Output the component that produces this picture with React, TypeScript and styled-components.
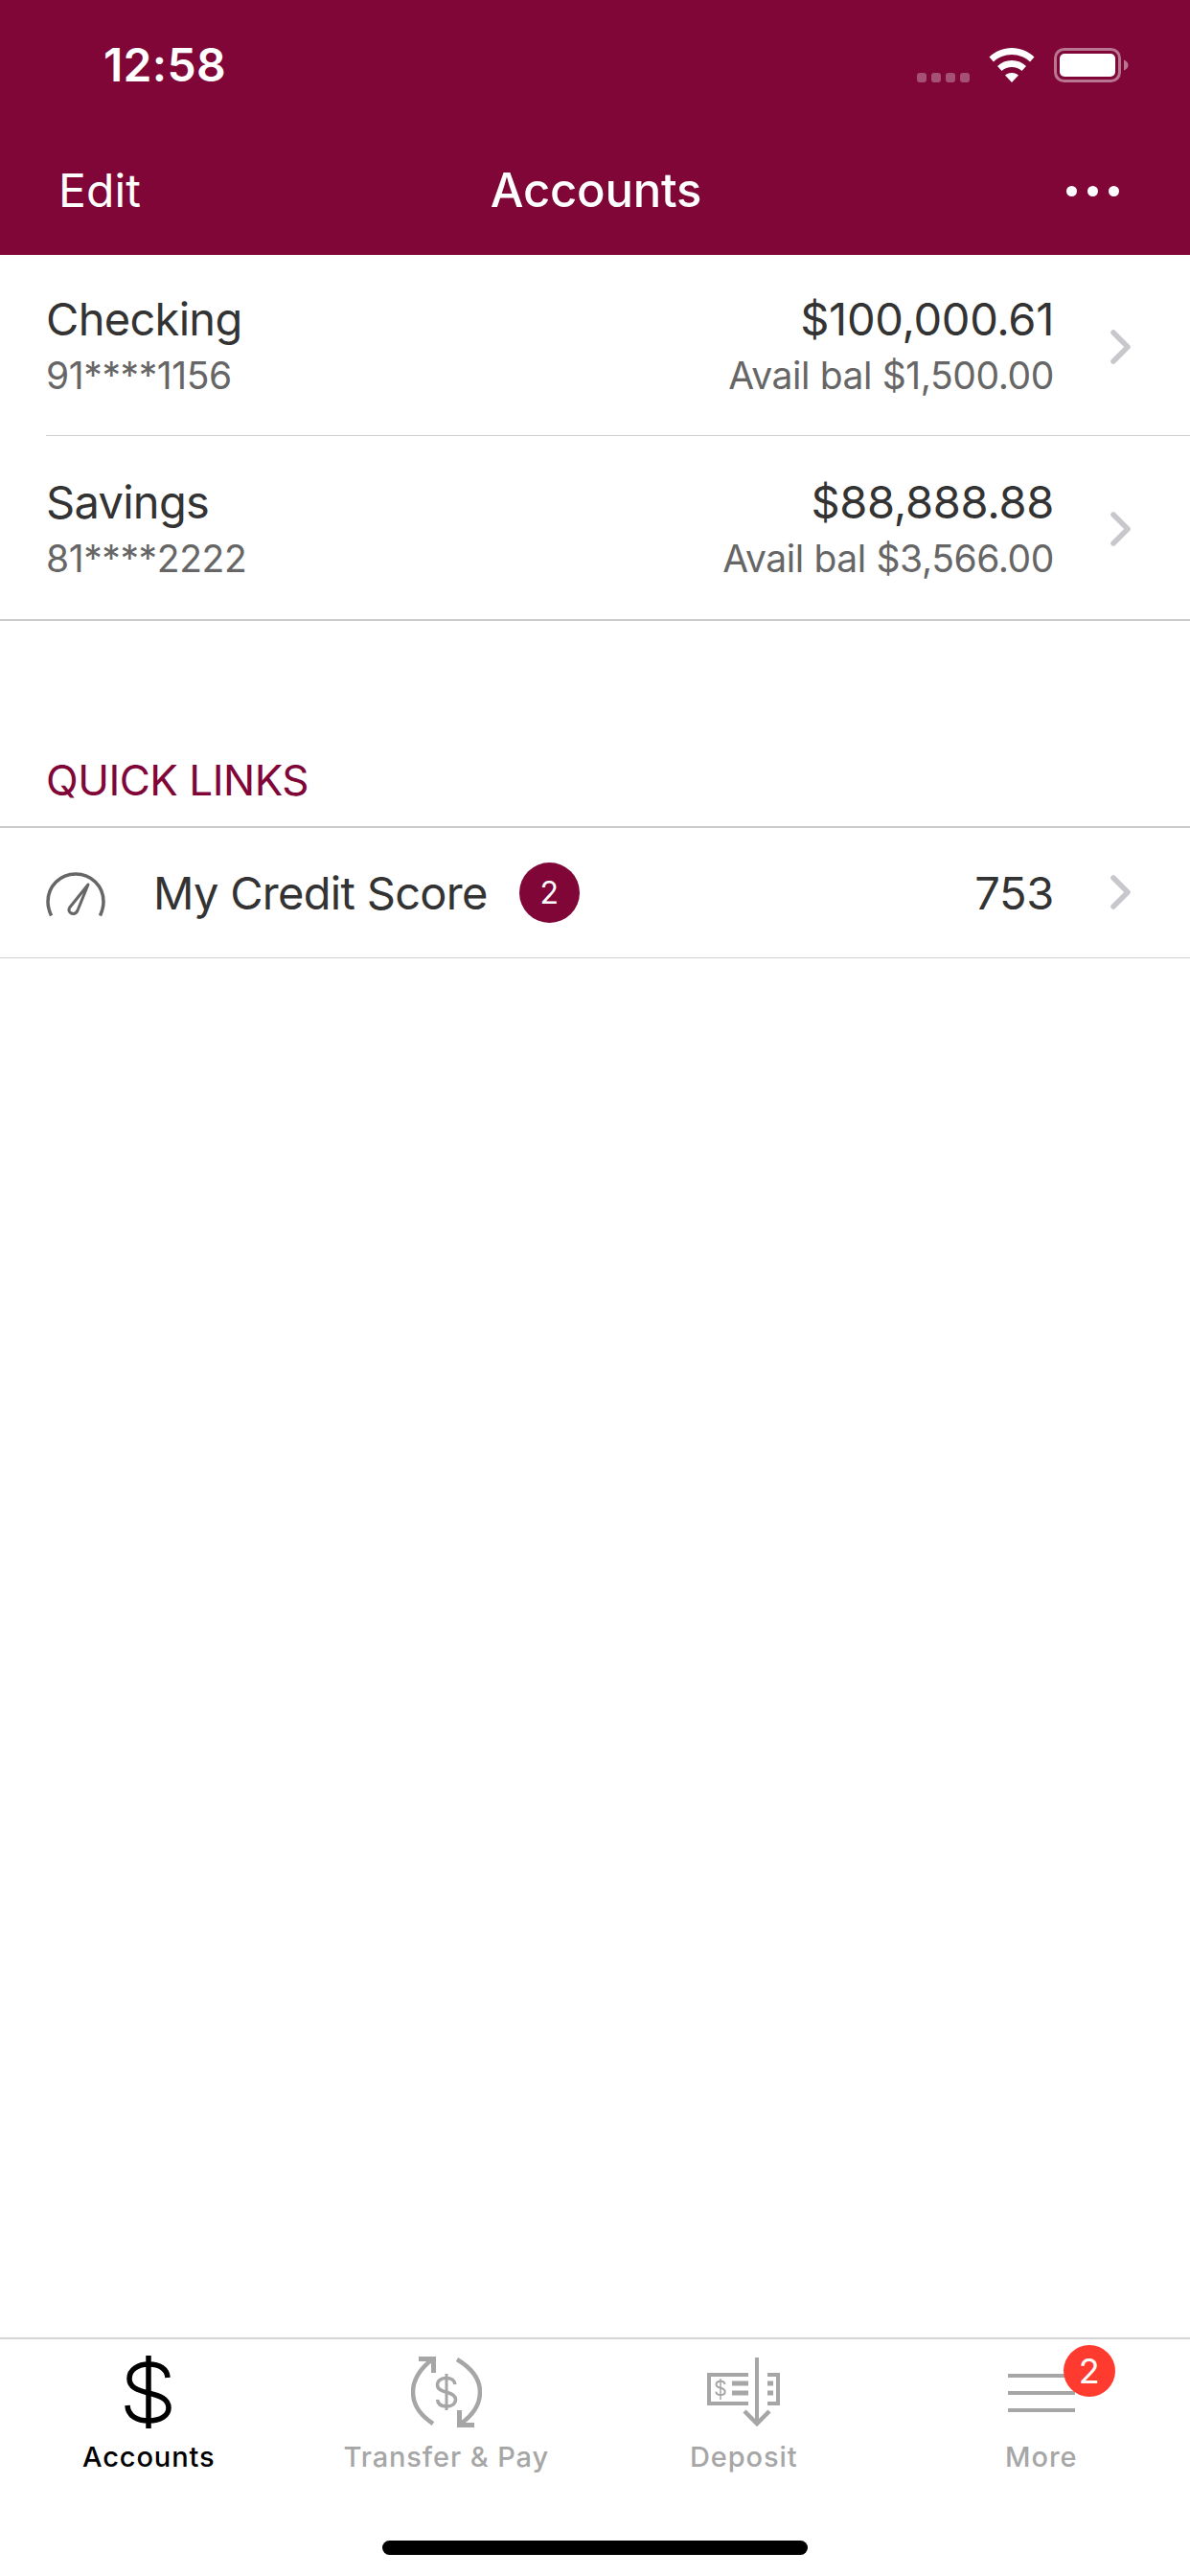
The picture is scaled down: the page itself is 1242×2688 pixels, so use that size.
import React from "react";
import styled, { createGlobalStyle } from "styled-components";

const BRAND = "#7f0637";

const GlobalStyle = createGlobalStyle`
    html, body {
        margin: 0;
        padding: 0;
        background: #fff;
    }
    body {
        font-family: Inter, "Liberation Sans", sans-serif;
        -webkit-font-smoothing: antialiased;
    }
`;

const Screen = styled.div`
    width: 1242px;
    height: 2688px;
    display: flex;
    flex-direction: column;
    background: #fff;
    overflow: hidden;
`;

const Header = styled.header`
    height: 266px;
    flex-shrink: 0;
    background: ${BRAND};
    color: #fff;
    display: flex;
    flex-direction: column;
`;

const StatusBar = styled.div`
    height: 134px;
    display: flex;
    align-items: flex-start;
    justify-content: space-between;
    padding: 41px 64px 0 108px;
    box-sizing: border-box;
`;

const Clock = styled.div`
    font-size: 48px;
    line-height: 54px;
    font-weight: 600;
    letter-spacing: 0.3px;
`;

const StatusIcons = styled.div`
    display: flex;
    align-items: flex-end;
    gap: 20px;
    padding-top: 9px;
`;

const SignalDots = styled.div`
    display: flex;
    gap: 5px;
`;

const SignalDot = styled.span`
    width: 10px;
    height: 10px;
    border-radius: 3px;
    background: rgba(255, 255, 255, 0.3);
`;

const NavBar = styled.div`
    flex: 1;
    display: flex;
    align-items: center;
    justify-content: space-between;
    padding: 0 74px 0 61px;
    position: relative;
    margin-top: -2px;
`;

const NavEdit = styled.div`
    font-size: 48px;
    line-height: 60px;
    letter-spacing: 0.1px;
`;

const NavTitle = styled.div`
    position: absolute;
    left: 2px;
    right: 0;
    text-align: center;
    font-size: 49px;
    line-height: 60px;
    font-weight: 500;
    letter-spacing: -0.2px;
`;

const NavDots = styled.div`
    display: flex;
    gap: 11px;
`;

const NavDot = styled.span`
    width: 11px;
    height: 11px;
    border-radius: 50%;
    background: #fff;
`;

const AccountList = styled.section`
    border-bottom: 2px solid #cccccc;
    display: flex;
    flex-direction: column;
`;

const AccountRow = styled.div<{ $last?: boolean }>`
    height: ${(p) => (p.$last ? 191 : 189)}px;
    margin-left: 48px;
    padding: 5px 60px 0 0;
    box-sizing: border-box;
    display: flex;
    align-items: center;
    border-bottom: ${(p) => (p.$last ? "none" : "1px solid #cfcfcf")};
`;

const AccountText = styled.div`
    flex: 1;
    display: flex;
    flex-direction: column;
    gap: 1px;
`;

const Line = styled.div`
    display: flex;
    justify-content: space-between;
    align-items: baseline;
`;

const MainText = styled.span`
    font-size: 47px;
    line-height: 58px;
    color: #333;
    letter-spacing: -0.3px;
`;

const NameText = styled(MainText)`
    letter-spacing: -0.7px;
`;

const SubText = styled.span`
    font-size: 39px;
    line-height: 58px;
    color: #666;
    letter-spacing: -0.4px;
`;

const ChevronWrap = styled.div`
    margin-left: 58px;
    display: flex;
    margin-top: -2px;
`;

const SectionTitle = styled.h2`
    margin: 90px 0 0;
    height: 126px;
    padding: 0 0 21px 48px;
    display: flex;
    align-items: flex-end;
    box-sizing: border-box;
    font-size: 44px;
    line-height: 54px;
    font-weight: 400;
    letter-spacing: -0.5px;
    color: ${BRAND};
    border-bottom: 2px solid #cccccc;
`;

const LinkRow = styled.div`
    height: 136px;
    box-sizing: border-box;
    border-bottom: 1px solid #cfcfcf;
    display: flex;
    align-items: center;
    padding: 0 60px 0 48px;
`;

const GaugeWrap = styled.div`
    width: 112px;
    display: flex;
    margin-top: 5px;
`;

const LinkLabel = styled(NameText)``;

const LinkBadge = styled.span`
    width: 63px;
    height: 63px;
    margin-left: 33px;
    border-radius: 50%;
    background: ${BRAND};
    color: #fff;
    font-size: 32px;
    display: flex;
    align-items: center;
    justify-content: center;
`;

const LinkValue = styled(MainText)`
    margin-left: auto;
`;

const Spacer = styled.div`
    flex: 1;
`;

const TabBar = styled.nav`
    height: 249px;
    flex-shrink: 0;
    box-sizing: border-box;
    border-top: 2px solid #d4d4d4;
    display: flex;
    flex-direction: column;
`;

const Tabs = styled.div`
    display: grid;
    grid-template-columns: repeat(4, 1fr);
    padding-top: 17px;
`;

const Tab = styled.div<{ $active?: boolean }>`
    display: flex;
    flex-direction: column;
    align-items: center;
    color: ${(p) => (p.$active ? "#000" : "#a6a6a6")};
`;

const TabIcon = styled.div`
    position: relative;
    height: 76px;
    display: flex;
    align-items: center;
    justify-content: center;
`;

const TabLabel = styled.span`
    margin-top: 12px;
    font-size: 29px;
    line-height: 36px;
    font-weight: 500;
    letter-spacing: 0.9px;
`;

const TabBadge = styled.span`
    position: absolute;
    top: -11px;
    left: 58px;
    width: 54px;
    height: 54px;
    border-radius: 50%;
    background: #ff3b30;
    color: #fff;
    font-size: 36px;
    font-weight: 400;
    display: flex;
    align-items: center;
    justify-content: center;
`;

const HomeIndicator = styled.div`
    width: 444px;
    height: 15px;
    margin: 69px auto 0;
    border-radius: 8px;
    background: #000;
`;

const Wifi = () => (
    <svg width="48" height="36" viewBox="0 0 48 36">
        <path d="M24 0C15 0 7 3.500 0.500 9.500L5 14.500C10 9.800 16.500 7 24 7s14 2.800 19 7.500l4.500-5C41 3.500 33 0 24 0z" fill="#fff" />
        <path d="M24 13c-6 0-11 2.300-15 6l4.500 5c2.800-2.600 6.500-4 10.500-4s7.700 1.400 10.500 4l4.500-5c-4-3.700-9-6-15-6z" fill="#fff" />
        <path d="M24 26c-3 0-5.200 1-7 2.500L24 36l7-7.500C29.200 27 27 26 24 26z" fill="#fff" />
    </svg>
);

const Battery = () => (
    <svg width="78" height="36" viewBox="0 0 78 36">
        <rect x="1.500" y="1.500" width="67" height="33" rx="9" fill="none" stroke="#fff" strokeOpacity="0.45" strokeWidth="3" />
        <rect x="6" y="6" width="58" height="24" rx="5" fill="#fff" />
        <path d="M73 12.500c2.800 1 4.500 3 4.500 5.500s-1.700 4.500-4.500 5.500z" fill="#fff" fillOpacity="0.45" />
    </svg>
);

const Chevron = () => (
    <svg width="24" height="38" viewBox="0 0 24 38">
        <path d="M4 4l15 15L4 34" fill="none" stroke="#c7c7cc" strokeWidth="5.500" strokeLinecap="round" strokeLinejoin="round" />
    </svg>
);

const Gauge = () => (
    <svg width="62" height="48" viewBox="0 0 62 48">
        <path d="M5.500 45.500C3.500 41 2 36 2 31 2 14.500 15 2 31 2s29 12.500 29 29c0 5-1.500 10-3.500 14.500" fill="none" stroke="#666" strokeWidth="3.500" />
        <path d="M44 13L33 40c-1.400 3-4 4-6.500 3s-3.200-3.500-1.800-6z" fill="none" stroke="#666" strokeWidth="3" strokeLinejoin="round" />
    </svg>
);

const DollarIcon = () => (
    <svg width="50" height="76" viewBox="0 0 50 76">
        <path d="M25 0v76" stroke="currentColor" strokeWidth="5.500" />
        <path d="M45 23c-.5-9-8.500-14-19.500-14C14 9 5 14.500 5 24c0 9 8 12 20 15 12 3 21 6 21 15.500C46 63 37 68 25.500 68 12.500 68 3.500 62.500 3 52" fill="none" stroke="currentColor" strokeWidth="5.500" />
    </svg>
);

const TransferIcon = () => (
    <svg width="74" height="74" viewBox="0 0 74 74">
        <path d="M22 3C8 14 2 25 2 37c0 13 7 24 21 33" fill="none" stroke="currentColor" strokeWidth="4.500" />
        <path d="M8 2.500h15.500V17" fill="none" stroke="currentColor" strokeWidth="5" />
        <path d="M48 3c15 9 24 20 24 34 0 12-6 23-20 33" fill="none" stroke="currentColor" strokeWidth="4.500" />
        <path d="M66 71.500H50.500V56" fill="none" stroke="currentColor" strokeWidth="5" />
        <path d="M37 18v38" stroke="currentColor" strokeWidth="3" />
        <path d="M46 29c-.5-4-4-6.500-9-6.500-5.500 0-9.500 2.800-9.500 7.300 0 4.500 4 6 9.500 7.400 5.500 1.400 9.500 3 9.500 7.500s-4 7.300-9.500 7.300c-5.500 0-9-2.700-9.500-7" fill="none" stroke="currentColor" strokeWidth="3.500" />
    </svg>
);

const DepositIcon = () => (
    <svg width="76" height="72" viewBox="0 0 76 72">
        <path d="M52 0v70" stroke="currentColor" strokeWidth="4" />
        <path d="M39 56l13 13 13-13" fill="none" stroke="currentColor" strokeWidth="4.500" />
        <path d="M43 18H2v30h41" fill="none" stroke="currentColor" strokeWidth="4" />
        <path d="M63 18h11v30H63" fill="none" stroke="currentColor" strokeWidth="4" />
        <path d="M26 27h17M26 37h17" stroke="currentColor" strokeWidth="5" />
        <path d="M63 27h6M63 37h6" stroke="currentColor" strokeWidth="5" />
        <path d="M14 22v22" stroke="currentColor" strokeWidth="1.500" />
        <path d="M18.500 28c-.3-2.200-2-3.300-4.500-3.300-2.700 0-4.500 1.400-4.500 3.500s1.800 2.900 4.500 3.600c2.700.7 4.700 1.500 4.700 3.700s-2 3.600-4.700 3.600c-2.600 0-4.400-1.300-4.700-3.500" fill="none" stroke="currentColor" strokeWidth="2" />
    </svg>
);

const MenuIcon = () => (
    <svg width="70" height="76" viewBox="0 0 70 76">
        <path d="M0 21h70M0 39h70M0 57h70" stroke="currentColor" strokeWidth="4" />
    </svg>
);

const accounts = [
    { name: "Checking", mask: "91****1156", balance: "$100,000.61", avail: "Avail bal $1,500.00" },
    { name: "Savings", mask: "81****2222", balance: "$88,888.88", avail: "Avail bal $3,566.00" },
];

export default function App() {
    return (
        <Screen>
            <GlobalStyle />
            <Header>
                <StatusBar>
                    <Clock>12:58</Clock>
                    <StatusIcons>
                        <SignalDots>
                            <SignalDot />
                            <SignalDot />
                            <SignalDot />
                            <SignalDot />
                        </SignalDots>
                        <Wifi />
                        <Battery />
                    </StatusIcons>
                </StatusBar>
                <NavBar>
                    <NavEdit>Edit</NavEdit>
                    <NavTitle>Accounts</NavTitle>
                    <NavDots>
                        <NavDot />
                        <NavDot />
                        <NavDot />
                    </NavDots>
                </NavBar>
            </Header>

            <AccountList>
                {accounts.map((a, i) => (
                    <AccountRow key={a.name} $last={i === accounts.length - 1}>
                        <AccountText>
                            <Line>
                                <NameText>{a.name}</NameText>
                                <MainText>{a.balance}</MainText>
                            </Line>
                            <Line>
                                <SubText>{a.mask}</SubText>
                                <SubText>{a.avail}</SubText>
                            </Line>
                        </AccountText>
                        <ChevronWrap>
                            <Chevron />
                        </ChevronWrap>
                    </AccountRow>
                ))}
            </AccountList>

            <SectionTitle>QUICK LINKS</SectionTitle>
            <LinkRow>
                <GaugeWrap>
                    <Gauge />
                </GaugeWrap>
                <LinkLabel>My Credit Score</LinkLabel>
                <LinkBadge>2</LinkBadge>
                <LinkValue>753</LinkValue>
                <ChevronWrap>
                    <Chevron />
                </ChevronWrap>
            </LinkRow>

            <Spacer />

            <TabBar>
                <Tabs>
                    <Tab $active>
                        <TabIcon>
                            <DollarIcon />
                        </TabIcon>
                        <TabLabel>Accounts</TabLabel>
                    </Tab>
                    <Tab>
                        <TabIcon>
                            <TransferIcon />
                        </TabIcon>
                        <TabLabel>Transfer &amp; Pay</TabLabel>
                    </Tab>
                    <Tab>
                        <TabIcon>
                            <DepositIcon />
                        </TabIcon>
                        <TabLabel>Deposit</TabLabel>
                    </Tab>
                    <Tab>
                        <TabIcon>
                            <MenuIcon />
                            <TabBadge>2</TabBadge>
                        </TabIcon>
                        <TabLabel>More</TabLabel>
                    </Tab>
                </Tabs>
                <HomeIndicator />
            </TabBar>
        </Screen>
    );
}
